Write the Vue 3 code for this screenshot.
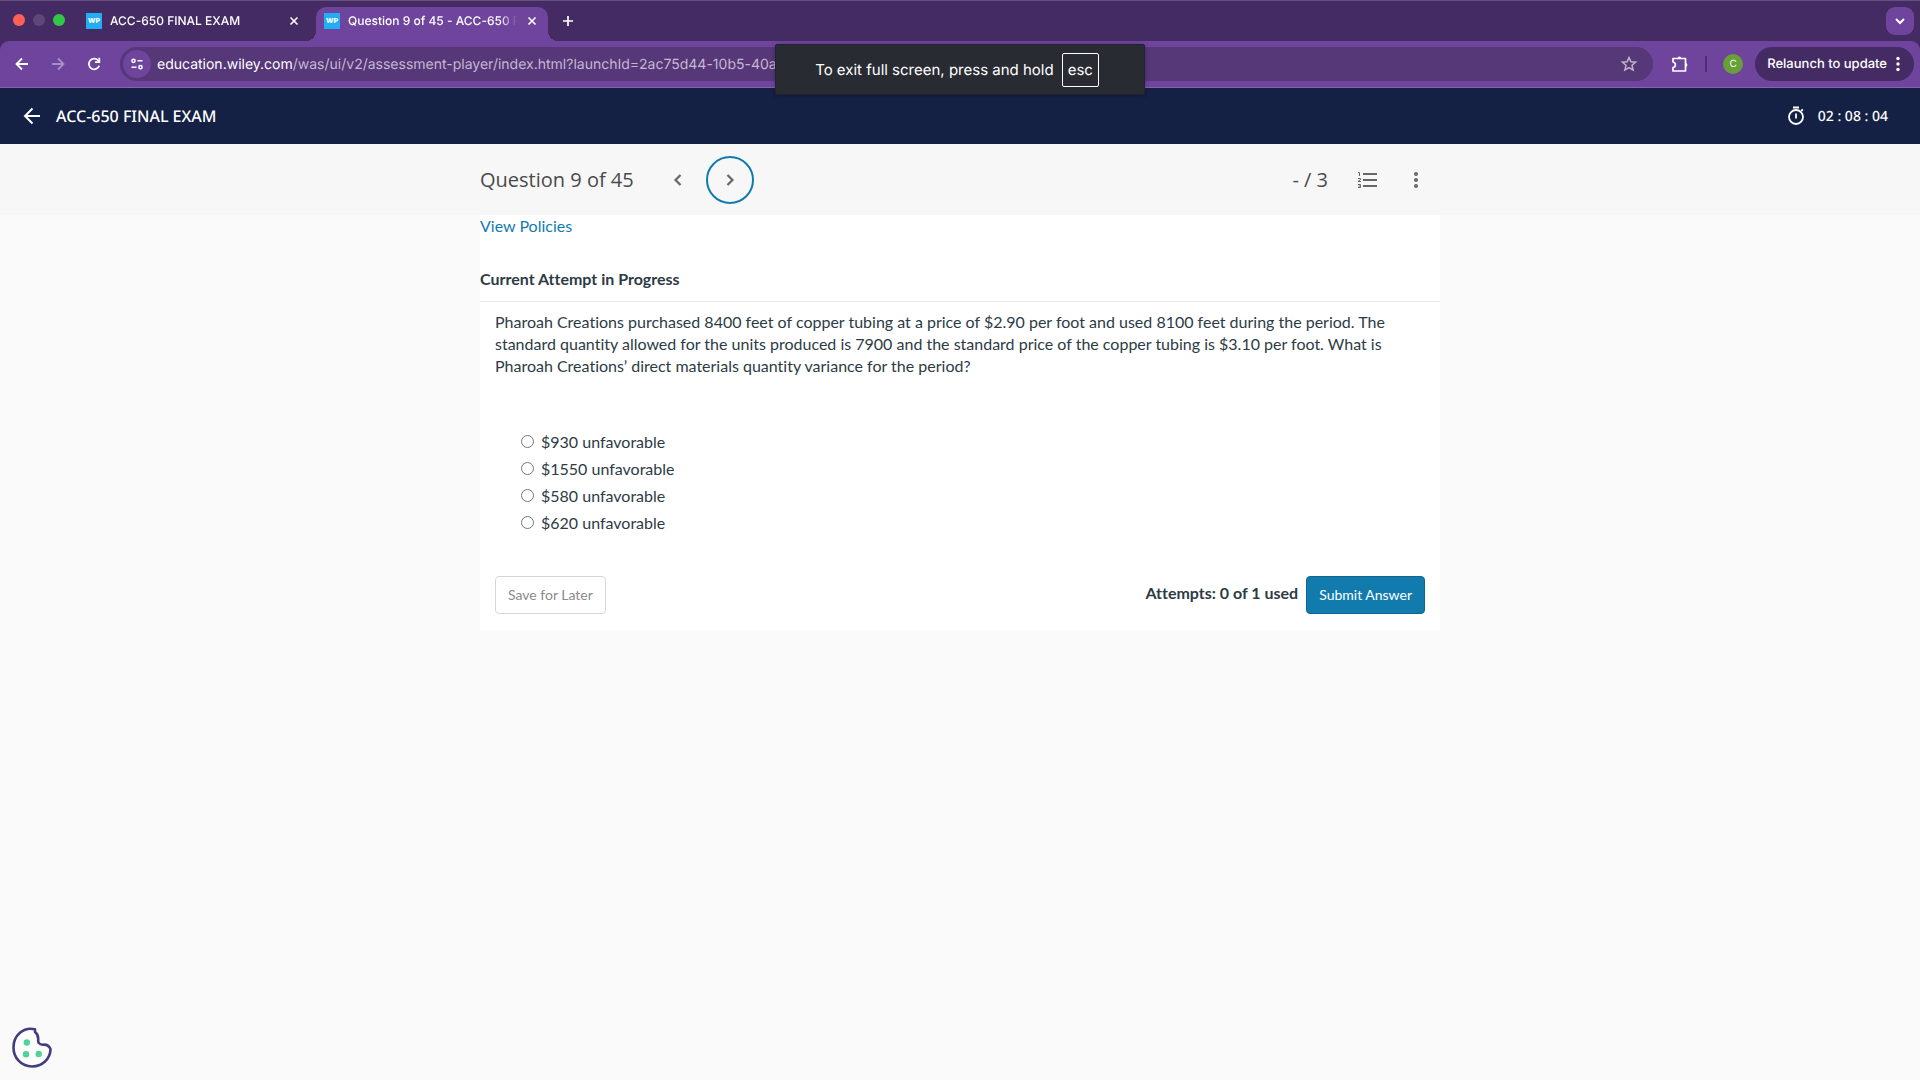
<template>
  <div class="screen">
    <header class="browser">
      <div class="tab-strip">
        <div class="lights">
          <span class="light red"></span>
          <span class="light dim"></span>
          <span class="light green"></span>
        </div>
        <div v-for="tab in tabs" :key="tab.id" class="tab" :class="{ active: tab.active }">
          <span class="favicon">WP</span>
          <span class="tab-title">{{ tab.title }}</span>
          <button class="icon-btn tab-close" type="button" aria-label="Close tab">
            <svg width="10" height="10" viewBox="0 0 10 10"><path d="M1.5 1.5l7 7M8.5 1.5l-7 7" stroke="#fff" stroke-width="1.6" /></svg>
          </button>
        </div>
        <button class="icon-btn new-tab" type="button" aria-label="New tab">
          <svg width="12" height="12" viewBox="0 0 12 12"><path d="M6 1v10M1 6h10" stroke="#fff" stroke-width="1.7" /></svg>
        </button>
        <button class="icon-btn tab-search" type="button" aria-label="Search tabs">
          <svg width="10" height="8" viewBox="0 0 10 8"><path d="M1 2l4 4 4-4" fill="none" stroke="#fff" stroke-width="2" /></svg>
        </button>
      </div>

      <div class="toolbar">
        <div class="nav-buttons">
          <button class="icon-btn" type="button" aria-label="Back">
            <svg width="16" height="16" viewBox="0 0 16 16"><path d="M14 8H3M8 2.5L2.5 8 8 13.5" fill="none" stroke="#fff" stroke-width="1.8" /></svg>
          </button>
          <button class="icon-btn faded" type="button" aria-label="Forward">
            <svg width="16" height="16" viewBox="0 0 16 16"><path d="M2 8h11M8 2.5L13.5 8 8 13.5" fill="none" stroke="#fff" stroke-width="1.8" /></svg>
          </button>
          <button class="icon-btn" type="button" aria-label="Reload">
            <svg width="16" height="16" viewBox="0 0 16 16">
              <path d="M13.2 9.8A5.3 5.3 0 1 1 12 4.3L13.3 5.6" fill="none" stroke="#fff" stroke-width="1.8" />
              <path d="M13.3 1.8v4.4H9" fill="none" stroke="#fff" stroke-width="1.8" />
            </svg>
          </button>
        </div>
        <div class="address">
          <button class="icon-btn site-info" type="button" aria-label="Site information">
            <svg width="14" height="14" viewBox="0 0 14 14" fill="none" stroke="#fff" stroke-width="1.5">
              <circle cx="3.5" cy="3.8" r="1.6" /><path d="M7.5 3.8h5M1.5 10.2h5" /><circle cx="10.5" cy="10.2" r="1.6" />
            </svg>
          </button>
          <span class="url"><b>education.wiley.com</b>/was/ui/v2/assessment-player/index.html?launchId=2ac75d44-10b5-40ae</span>
          <button class="icon-btn" type="button" aria-label="Bookmark">
            <svg width="18" height="18" viewBox="0 0 18 18"><path d="M9 2.5l1.9 4.3 4.7.4-3.6 3.1 1.1 4.6L9 12.5l-4.1 2.4L6 10.3 2.4 7.2l4.7-.4z" fill="none" stroke="#bfb8c4" stroke-width="1.5" /></svg>
          </button>
        </div>
        <div class="tools">
          <button class="icon-btn" type="button" aria-label="Extensions">
            <svg width="18" height="18" viewBox="0 0 18 18">
              <path d="M2 3.5h12.5V16H2v-3.5c3.2-.6 3.2-4.9 0-5.5z" fill="none" stroke="#fff" stroke-width="1.7" stroke-linejoin="round" />
              <path d="M6.5 3.5a1.9 1.9 0 0 1 3.8 0zM14.5 8a1.9 1.9 0 0 1 0 3.8z" fill="#fff" />
            </svg>
          </button>
          <span class="tool-divider"></span>
          <button class="icon-btn avatar" type="button">C</button>
        </div>
        <button class="relaunch" type="button">
          <span>Relaunch to update</span>
          <svg width="4" height="16" viewBox="0 0 4 16" fill="#fff"><circle cx="2" cy="2.5" r="1.7" /><circle cx="2" cy="8" r="1.7" /><circle cx="2" cy="13.5" r="1.7" /></svg>
        </button>
      </div>
      <div class="fullscreen-tip">
        <span>To exit full screen, press and hold</span>
        <kbd>esc</kbd>
      </div>
    </header>

    <div class="exam-bar">
      <button class="icon-btn" type="button" aria-label="Leave exam">
        <svg width="18" height="18" viewBox="0 0 18 18"><path d="M17 9H2.5M9.5 1.5L2 9l7.5 7.5" fill="none" stroke="#fff" stroke-width="2" /></svg>
      </button>
      <h1>ACC-650 FINAL EXAM</h1>
      <div class="timer">
        <svg width="18" height="20" viewBox="0 0 18 20" fill="none" stroke="#fff" stroke-width="1.8">
          <circle cx="9" cy="11" r="7" /><path d="M6 1.5h6M9 7.5v5M14.2 5l1.6-1.6" />
        </svg>
        <time>{{ timeLeft }}</time>
      </div>
    </div>

    <nav class="question-bar">
      <div class="question-inner">
        <span class="question-count">Question 9 of 45</span>
        <button class="step" type="button" aria-label="Previous question">
          <svg width="8" height="12" viewBox="0 0 8 12"><path d="M6.5 1l-5 5 5 5" fill="none" stroke="#666" stroke-width="2.2" /></svg>
        </button>
        <button class="step current" type="button" aria-label="Next question">
          <svg width="8" height="12" viewBox="0 0 8 12"><path d="M1.5 1l5 5-5 5" fill="none" stroke="#666" stroke-width="2.2" /></svg>
        </button>
        <span class="score">- / 3</span>
        <button class="icon-btn list" type="button" aria-label="Question list">
          <svg width="20" height="18" viewBox="0 0 20 18" fill="none" stroke="#666">
            <path d="M6 3h14M6 9h14M6 15h14" stroke-width="2" />
            <path d="M1 1.5h1.5V5M1 7.5h2.5v1L1 10.5h3M1 13.5h2.5v3H1M1.5 15h2" />
          </svg>
        </button>
        <button class="icon-btn" type="button" aria-label="More options">
          <svg width="4" height="16" viewBox="0 0 4 16" fill="#666"><circle cx="2" cy="2" r="2" /><circle cx="2" cy="8" r="2" /><circle cx="2" cy="14" r="2" /></svg>
        </button>
      </div>
    </nav>

    <main class="card">
      <a class="policies" href="#">View Policies</a>
      <h2>Current Attempt in Progress</h2>
      <div class="question">
        <p id="prompt">
          Pharoah Creations purchased 8400 feet of copper tubing at a price of $2.90 per foot and used 8100 feet during the period. The
          standard quantity allowed for the units produced is 7900 and the standard price of the copper tubing is $3.10 per foot. What is
          Pharoah Creations’ direct materials quantity variance for the period?
        </p>
        <div class="answers" role="radiogroup" aria-labelledby="prompt">
          <label v-for="answer in answers" :key="answer" class="answer">
            <input type="radio" name="answer" :value="answer" v-model="selected" />
            <span>{{ answer }}</span>
          </label>
        </div>
        <div class="actions">
          <button class="btn save" type="button">Save for Later</button>
          <span class="attempts">Attempts: 0 of 1 used</span>
          <button class="btn submit" type="button">Submit Answer</button>
        </div>
      </div>
    </main>

    <button class="icon-btn cookie" type="button" aria-label="Cookie preferences">
      <svg width="40" height="42" viewBox="0 0 40 42">
        <path d="M23 2.3C11.5-.5 1.5 8.5 1.5 20.5c0 10.5 8 19 18.5 19 10 0 18.5-7.5 18.5-17.5-1.5-3.5-4.500-4.800-8-4.300-3-.2-4.700-2-4.300-5.200C26.500 8 25 6.500 23 5z" fill="#fff" stroke="#443d80" stroke-width="2.6" stroke-linejoin="round" />
        <g fill="#4dd49a"><circle cx="14.8" cy="15.5" r="3.2" /><circle cx="14" cy="27.3" r="3.2" /><circle cx="26.7" cy="27" r="3.2" /></g>
      </svg>
    </button>
  </div>
</template>

<script setup>
import { ref } from 'vue';

const tabs = [
  { id: 1, title: 'ACC-650 FINAL EXAM', active: false },
  { id: 2, title: 'Question 9 of 45 - ACC-650 F', active: true }
];

const timeLeft = ref('02 : 08 : 04');

const answers = ['$930 unfavorable', '$1550 unfavorable', '$580 unfavorable', '$620 unfavorable'];
const selected = ref('');
</script>

<style>
body {
  background: #fafafa;
}
</style>

<style scoped>
.screen {
  min-height: 100vh;
  font-family: Lato, sans-serif;
  font-variant-ligatures: none;
  color: #2d3b45;
}

.screen,
.screen * {
  box-sizing: border-box;
}

button {
  font-family: inherit;
  text-rendering: inherit;
  cursor: pointer;
}

svg {
  display: block;
  flex: none;
}

.icon-btn {
  display: flex;
  align-items: center;
  justify-content: center;
  flex: none;
  padding: 0;
  border: none;
  background: none;
}

.browser {
  position: relative;
  background: #442b63;
  color: #fff;
  font-family: Inter, sans-serif;
  text-rendering: geometricPrecision;
}

.tab-strip {
  display: flex;
  align-items: flex-end;
  height: 41px;
  padding-right: 6px;
  border-top: 1px solid #68517f;
}

.lights {
  display: flex;
  gap: 8px;
  width: 78px;
  height: 34px;
  padding: 7px 0 0 13px;
}

.light {
  width: 12px;
  height: 12px;
  border-radius: 50%;
}

.red {
  background: #ff5f57;
}

.dim {
  background: #5f4778;
}

.green {
  background: #32c748;
}

.tab {
  position: relative;
  display: flex;
  align-items: center;
  width: 232px;
  height: 34px;
  margin-right: 6px;
  padding: 0 10px 6px 8px;
  border-radius: 10px 10px 0 0;
}

.tab.active {
  background: #6e449c;
}

.tab.active::before,
.tab.active::after {
  content: '';
  position: absolute;
  bottom: 0;
  width: 10px;
  height: 10px;
}

.tab.active::before {
  right: 100%;
  background: radial-gradient(circle at 0 0, transparent 10px, #6e449c 10px);
}

.tab.active::after {
  left: 100%;
  background: radial-gradient(circle at 100% 0, transparent 10px, #6e449c 10px);
}

.favicon {
  width: 16px;
  height: 16px;
  background: #22aef5;
  font-size: 7px;
  font-weight: 800;
  line-height: 16px;
  text-align: center;
}

.tab-title {
  flex: 1;
  min-width: 0;
  margin: 0 2px 0 8px;
  font-size: 12px;
  font-weight: 500;
  line-height: 16px;
  white-space: nowrap;
  mask-image: linear-gradient(to right, #000 86%, transparent 96%);
}

.tab-close {
  width: 12px;
  height: 16px;
}

.new-tab {
  width: 28px;
  height: 28px;
  margin-bottom: 6px;
}

.tab-search {
  width: 28px;
  height: 28px;
  margin: 0 0 6px auto;
  border-radius: 9px;
  background: #6e449c;
}

.toolbar {
  display: flex;
  align-items: center;
  height: 47px;
  padding: 0 6px 0 14px;
  border-bottom: 1px solid #8862ad;
  border-radius: 9px 9px 0 0;
  background: #6e449c;
}

.nav-buttons {
  display: flex;
  gap: 20px;
  margin-right: 18px;
}

.faded {
  opacity: 0.4;
}

.address {
  display: flex;
  align-items: center;
  flex: 1;
  min-width: 0;
  height: 34px;
  padding: 0 15px 0 3px;
  border-radius: 17px;
  background: #563778;
}

.site-info {
  width: 28px;
  height: 28px;
  border-radius: 50%;
  background: #6e449c;
}

.url {
  flex: 1;
  margin-left: 6px;
  overflow: hidden;
  color: #c5b8d1;
  font-size: 14px;
  white-space: nowrap;
}

.url b {
  color: #fff;
  font-weight: 400;
}

.tools {
  display: flex;
  align-items: center;
  gap: 16px;
  margin: 0 12px 0 18px;
}

.tool-divider {
  width: 2px;
  height: 16px;
  background: #4c2e6c;
}

.avatar {
  width: 20px;
  height: 20px;
  border-radius: 50%;
  background: #689f38;
  color: #fff;
  font-size: 10px;
}

.relaunch {
  display: flex;
  align-items: center;
  gap: 9px;
  height: 34px;
  padding: 0 14px 0 12px;
  border: none;
  border-radius: 17px;
  background: #442b63;
  color: #fff;
  font-size: 13px;
  font-weight: 500;
}

.fullscreen-tip {
  position: absolute;
  top: 44px;
  left: 50%;
  display: flex;
  align-items: center;
  justify-content: center;
  gap: 8px;
  width: 370px;
  height: 51px;
  margin-left: -185px;
  padding-right: 6px;
  border: 1px solid #202330;
  border-radius: 2px;
  background: #292b33;
  font-size: 15px;
  box-shadow: 0 1px 4px rgba(0, 0, 0, 0.3);
}

.fullscreen-tip kbd {
  padding: 0 5px;
  border: 1px solid #fff;
  border-radius: 2px;
  font-family: inherit;
  line-height: 32px;
}

.exam-bar {
  display: flex;
  align-items: center;
  height: 56px;
  padding: 0 32px 0 23px;
  background: #152144;
  color: #fff;
  font-family: 'Noto Sans', 'Open Sans', sans-serif;
  text-rendering: geometricPrecision;
}

.exam-bar h1 {
  margin: 0 0 0 15px;
  font-size: 16px;
  font-weight: 500;
}

.timer {
  display: flex;
  align-items: center;
  gap: 13px;
  margin-left: auto;
  font-size: 14px;
  font-weight: 500;
}

.question-bar {
  background: #f7f7f7;
  color: #4a4a4a;
  font-family: 'Open Sans', sans-serif;
  font-size: 20px;
}

.question-inner,
.card {
  width: 100%;
  max-width: 960px;
  margin: 0 auto;
}

.question-inner {
  display: flex;
  align-items: center;
  height: 71px;
  padding-right: 22px;
}

.question-count {
  margin-right: 20px;
}

.step {
  display: flex;
  align-items: center;
  justify-content: center;
  width: 48px;
  height: 48px;
  margin-right: 4px;
  padding: 0;
  border: 2px solid transparent;
  border-radius: 50%;
  background: none;
}

.step.current {
  border-color: #127bae;
}

.score {
  margin-left: auto;
}

.list {
  margin: 0 37px 0 29px;
}

.card {
  display: flow-root;
  background: #fff;
}

.policies {
  display: block;
  width: max-content;
  color: #127bae;
  font-size: 16px;
  line-height: 22px;
  text-decoration: none;
}

.card h2 {
  margin: 31px 0 0;
  padding-bottom: 11px;
  border-bottom: 1px solid #e8eaec;
  font-size: 16px;
  font-weight: 700;
  line-height: 22px;
}

.question {
  padding: 9px 15px 16px;
}

.question p {
  margin: 0;
  font-size: 16px;
  line-height: 22px;
}

.answers {
  display: grid;
  justify-items: start;
  gap: 5px;
  padding: 54px 0 42px 26px;
}

.answer {
  display: flex;
  align-items: center;
  gap: 7px;
  font-size: 16px;
  line-height: 22px;
}

.answer input {
  width: 13px;
  height: 13px;
  margin: 0 0 2px;
}

.actions {
  display: flex;
  align-items: center;
}

.attempts {
  margin: 0 8px 0 auto;
  padding-bottom: 6px;
  font-size: 16px;
  font-weight: 700;
}

.btn {
  height: 38px;
  padding: 0 12px 2px;
  border: 1px solid #d6d6d6;
  border-radius: 4px;
  font-size: 14px;
}

.save {
  background: #fff;
  color: #8b8b8b;
}

.submit {
  border-color: #0f6791;
  background: #127bae;
  color: #fff;
}

.cookie {
  position: fixed;
  bottom: 11px;
  left: 12px;
}
</style>
